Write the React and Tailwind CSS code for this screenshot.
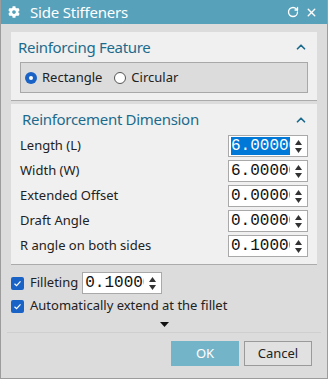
import { FaCog } from "react-icons/fa";
import { RotateCw, X, ChevronUp } from "lucide-react";

const rows = [
  { label: "Length (L)", value: "6.00000", selected: true },
  { label: "Width (W)", value: "6.00000" },
  { label: "Extended Offset", value: "0.00000" },
  { label: "Draft Angle", value: "0.00000" },
  { label: "R angle on both sides", value: "0.10000" },
];

function Spin({ value, selected }) {
  return (
    <div className="flex h-[22px] w-[80px] border border-[#a9a9a9] bg-white">
      <div className="w-[61px] overflow-hidden whitespace-nowrap pl-[2px] pt-[1px] font-['Liberation_Mono',monospace] text-[16px] leading-[18px] text-[#111]">
        <span className={selected ? "bg-[#0078d7] text-white" : ""}>{value}</span>
      </div>
      <div className="flex flex-1 flex-col items-center justify-center gap-[3px] bg-white">
        <svg width="7" height="5" viewBox="0 0 7 5"><path d="M3.5 0L7 5H0Z" fill="#333" /></svg>
        <svg width="7" height="5" viewBox="0 0 7 5"><path d="M0 0H7L3.5 5Z" fill="#333" /></svg>
      </div>
    </div>
  );
}

function Check() {
  return (
    <div className="flex h-[13px] w-[13px] items-center justify-center rounded-[2px] bg-[#1a63c6]">
      <svg width="9" height="9" viewBox="0 0 9 9">
        <path d="M1.5 4.8L3.6 6.7L7.5 2.3" stroke="white" strokeWidth="1.2" fill="none" />
      </svg>
    </div>
  );
}

export default function App() {
  return (
    <div className="flex h-[379px] w-[328px] flex-col border-x border-b border-[#9c9c9c] bg-[#dcdcdc] font-['Noto_Sans','Open_Sans',sans-serif] text-[#222]">
      {/* Title bar */}
      <div className="flex h-[24px] shrink-0 items-center bg-[#57a1bb] pl-[7px] pr-[9px] text-white">
        <FaCog size={12} />
        <span className="ml-[10px] text-[15px] leading-none tracking-[-0.2px]">Side Stiffeners</span>
        <div className="ml-auto flex items-center gap-[6px]">
          <RotateCw size={12} strokeWidth={2.6} />
          <X size={13} strokeWidth={2.6} />
        </div>
      </div>

      <div className="mt-[8px] px-[10px]">
        {/* Reinforcing Feature */}
        <div className="border-b border-[#ababab] bg-[#f0f0f0] px-[9px] pb-[7px]">
          <div className="flex h-[30px] items-center justify-between">
            <span className="-ml-[2px] text-[15px] tracking-[-0.3px] text-[#1d6b8c]">Reinforcing Feature</span>
            <ChevronUp size={14} strokeWidth={3} className="text-[#1d6b8c]" />
          </div>
          <div className="flex h-[31px] items-center border border-[#a8a8a8] bg-[#dcdcdc] pl-[4px] text-[13px]">
            <div className="flex h-[12px] w-[12px] items-center justify-center rounded-full bg-[#1a63c6]">
              <div className="h-[4px] w-[4px] rounded-full bg-white" />
            </div>
            <span className="ml-[5px]">Rectangle</span>
            <div className="ml-[12px] h-[12px] w-[12px] rounded-full border border-[#555] bg-white" />
            <span className="ml-[5px]">Circular</span>
          </div>
        </div>

        {/* Reinforcement Dimension */}
        <div className="mt-[3px] border-b border-[#ababab] bg-[#f0f0f0] px-[9px] pb-[7px]">
          <div className="flex h-[31px] items-center justify-between">
            <span className="ml-[2px] text-[15px] tracking-[-0.3px] text-[#1d6b8c]">Reinforcement Dimension</span>
            <ChevronUp size={14} strokeWidth={3} className="text-[#1d6b8c]" />
          </div>
          <div className="flex flex-col gap-[3px]">
            {rows.map((r) => (
              <div key={r.label} className="flex h-[22px] items-center justify-between text-[13px]">
                <span>{r.label}</span>
                <Spin value={r.value} selected={r.selected} />
              </div>
            ))}
          </div>
        </div>
      </div>

      {/* Options */}
      <div className="mt-[7px] flex flex-col px-[10px] text-[13px]">
        <div className="flex h-[22px] items-center">
          <Check />
          <span className="ml-[6px]">Filleting</span>
          <div className="ml-[4px]">
            <Spin value="0.10000" />
          </div>
        </div>
        <div className="mt-[2px] flex h-[20px] items-center">
          <Check />
          <span className="ml-[6px]">Automatically extend at the fillet</span>
        </div>
        <div className="mt-[6px] flex h-[5px] justify-center">
          <svg width="9" height="5" viewBox="0 0 9 5"><path d="M0 0H9L4.5 5Z" fill="#111" /></svg>
        </div>
      </div>

      <div className="mx-[6px] mt-[5px] border-t border-[#cfcfcf]" />

      <div className="mt-[8px] flex justify-end gap-[5px] pr-[15px] text-[13px]">
        <div className="flex h-[25px] w-[68px] items-center justify-center bg-[#74b4c9] text-white">OK</div>
        <div className="flex h-[25px] w-[68px] items-center justify-center border border-[#9a9a9a] bg-[#e1e1e1]">Cancel</div>
      </div>
    </div>
  );
}
